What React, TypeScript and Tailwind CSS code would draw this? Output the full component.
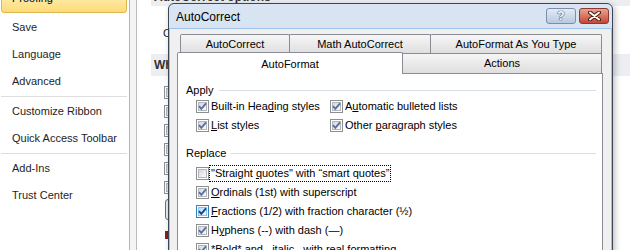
import type { ReactNode } from "react";

const navItems = ["Save", "Language", "Advanced"];
const navItems2 = ["Customize Ribbon", "Quick Access Toolbar"];
const navItems3 = ["Add-Ins", "Trust Center"];

function NavItem({ label }: { label: string }) {
  return <div className="flex h-[27px] items-center pl-[11px] text-[#1e1e1e]">{label}</div>;
}

function Box({ checked, hot }: { checked?: boolean; hot?: boolean }) {
  return (
    <span
      className={`relative flex h-[13px] w-[13px] shrink-0 items-center justify-center border bg-white ${
        hot ? "border-[#3c7fb1]" : "border-[#8e8f8f]"
      }`}
    >
      <span
        className={`h-[9px] w-[9px] border bg-linear-to-br ${
          hot ? "border-[#79c6f9] from-[#b9e2fb] to-[#eef8fe]" : "border-[#b3b6bb] from-[#d5d8dc] to-[#fafafa]"
        }`}
      />
      {checked && (
        <svg className="absolute inset-0" width="11" height="11" viewBox="0 0 11 11">
          <path
            d="M2 5.2 L4.3 7.8 L9 2.3"
            fill="none"
            stroke={hot ? "#1f3b8c" : "#5a6fa3"}
            strokeWidth="1.9"
          />
        </svg>
      )}
    </span>
  );
}

function Row({ checked, hot, focus, children }: { checked?: boolean; hot?: boolean; focus?: boolean; children: ReactNode }) {
  return (
    <div className="flex h-[19px] items-center">
      <Box checked={checked} hot={hot} />
      {focus ? (
        <span className="ml-[0px] border border-dotted border-black px-[1px] leading-[15px]">{children}</span>
      ) : (
        <span className="ml-[2px]">{children}</span>
      )}
    </div>
  );
}

function Group({ label }: { label: string }) {
  return (
    <div className="flex h-[14px] items-center gap-[5px]">
      <span>{label}</span>
      <span className="h-px flex-1 bg-[#d5dfe5]" />
    </div>
  );
}

function Tab({ label, w }: { label: string; w: string }) {
  return (
    <div
      className={`${w} -ml-px flex h-full items-center justify-center rounded-t-[2px] border border-b-0 border-[#898c95] bg-linear-to-b from-[#f6f6f6] to-[#dedede]`}
    >
      {label}
    </div>
  );
}

export default function App() {
  return (
    <div className="relative flex h-[250px] w-[630px] overflow-hidden bg-white font-['Liberation_Sans',Arial,sans-serif] text-[11px] text-black">
      {/* options nav */}
      <div className="w-[130px] shrink-0 border-r border-[#b4b4b4] pr-[2px] pl-px">
        <div className="-mt-[12px] flex h-[25px] items-end rounded-[3px] border border-[#dcb84f] bg-linear-to-b from-[#fff3c4] to-[#fddb76] pb-[6px] pl-[10px]">
          Proofing
        </div>
        <div className="mt-px">
          {navItems.map((l) => (
            <NavItem key={l} label={l} />
          ))}
        </div>
        <div className="my-px h-px bg-[#dedede]" />
        {navItems2.map((l) => (
          <NavItem key={l} label={l} />
        ))}
        <div className="my-px h-px bg-[#dedede]" />
        {navItems3.map((l) => (
          <NavItem key={l} label={l} />
        ))}
      </div>
      <div className="w-[7px] shrink-0 border-r border-[#bcbcbc] bg-[#f4f4f4]" />

      {/* page behind the dialog */}
      <div className="flex flex-1 flex-col pl-[14px]">
        <div className="h-[6px] overflow-hidden bg-[#eceef2]">
          <div className="-mt-[10px] pl-[3px] text-[12px] leading-[14px] font-bold text-[#333]">AutoCorrect options</div>
        </div>
        <div className="mt-[19px] pl-[12px] text-[#222]">Change how Word corrects and formats text as you type:</div>
        <div className="mt-[12px] flex h-[22px] items-center bg-[#eceef2] pl-[3px] text-[12px] font-bold text-[#333]">
          When correcting spelling in Microsoft Office programs
        </div>
        <div className="mt-[7px] pl-[13px]">
          {[0, 1, 2, 3, 4, 5].map((i) => (
            <div key={i} className="flex h-[19px] items-center">
              <Box />
            </div>
          ))}
        </div>
        <div className="mt-[2px] ml-[14px] h-[21px] w-[120px] rounded-[3px] border border-[#707070] bg-[#ececec]" />
        <div className="mt-[11px] ml-[14px] h-[8px] w-[3px] bg-[#8b1c1c]" />
      </div>

      {/* AutoCorrect dialog */}
      <div className="absolute top-[3px] left-[168px] flex h-[270px] w-[445px] flex-col rounded-t-[6px] border border-[#3b4656] bg-linear-to-b from-[#d9e5f3] to-[#c4d6ec] shadow-[2px_2px_6px_rgba(0,0,0,0.25)]">
        <div className="flex h-[24px] shrink-0 items-start">
          <span className="mt-[4px] pl-[7px] text-[12px] text-black">AutoCorrect</span>
          <div className="mt-[4px] mr-[3px] ml-auto flex gap-[3px]">
            <div className="flex h-[16px] w-[30px] items-center justify-center rounded-[3px] border border-[#7d8fa8] bg-linear-to-b from-[#e3ebf5] to-[#b8c9df]">
              <span className="text-[12px] leading-none font-bold text-white [text-shadow:0_0_1px_#3a4a60,0_0_1px_#3a4a60,0_0_1px_#3a4a60]">?</span>
            </div>
            <div className="flex h-[16px] w-[30px] items-center justify-center rounded-[3px] border border-[#8a3a2e] bg-linear-to-b from-[#e7a394] to-[#c5452f]">
              <svg width="13" height="10" viewBox="0 0 13 10">
                <path d="M2 1.5 L11 8.5 M11 1.5 L2 8.5" stroke="#4a1a12" strokeWidth="4" strokeLinecap="round" />
                <path d="M2 1.5 L11 8.5 M11 1.5 L2 8.5" stroke="#ffffff" strokeWidth="2" strokeLinecap="round" />
              </svg>
            </div>
          </div>
        </div>
        <div className="flex flex-1 flex-col border-x border-t border-[#9ec3e6] bg-[#f0f0f0] pt-[5px] pr-[8px] pl-[7px]">
          {/* back tab row */}
          <div className="flex h-[20px] pl-[4px] leading-none">
            <Tab label="AutoCorrect" w="w-[110px]" />
            <Tab label="Math AutoCorrect" w="w-[142px]" />
            <Tab label="AutoFormat As You Type" w="w-[172px]" />
          </div>
          {/* front tab row */}
          <div className="relative z-10 -mt-px flex h-[20px] items-end">
            <div className="-mb-px flex h-[22px] w-[226px] items-center justify-center rounded-t-[2px] border border-b-0 border-[#898c95] bg-white pt-[2px]">
              AutoFormat
            </div>
            <div className="-ml-px flex h-[20px] w-[200px] items-center justify-center border border-b-0 border-[#898c95] bg-linear-to-b from-[#f6f6f6] to-[#dedede]">
              Actions
            </div>
          </div>
          {/* tab page */}
          <div className="flex-1 border border-[#898c95] bg-white pt-[9px] pr-[6px] pl-[8px]">
            <Group label="Apply" />
            <div className="grid grid-cols-[134px_1fr] pl-[10px]">
              <Row checked>
                Built-in Hea<u>d</u>ing styles
              </Row>
              <Row checked>
                A<u>u</u>tomatic bulleted lists
              </Row>
              <Row checked>
                <u>L</u>ist styles
              </Row>
              <Row checked>
                Other <u>p</u>aragraph styles
              </Row>
            </div>
            <div className="mt-[11px]">
              <Group label="Replace" />
            </div>
            <div className="mt-[4px] pl-[10px]">
              <Row focus>
                "Straight <u>q</u>uotes" with “smart quotes”
              </Row>
              <Row checked>
                <u>O</u>rdinals (1st) with superscript
              </Row>
              <Row checked hot>
                <u>F</u>ractions (1/2) with fraction character (½)
              </Row>
              <Row checked>
                H<u>y</u>phens (--) with dash (—)
              </Row>
              <Row checked>
                *Bold* and _italic_ with real formatting
              </Row>
            </div>
          </div>
        </div>
      </div>
    </div>
  );
}
